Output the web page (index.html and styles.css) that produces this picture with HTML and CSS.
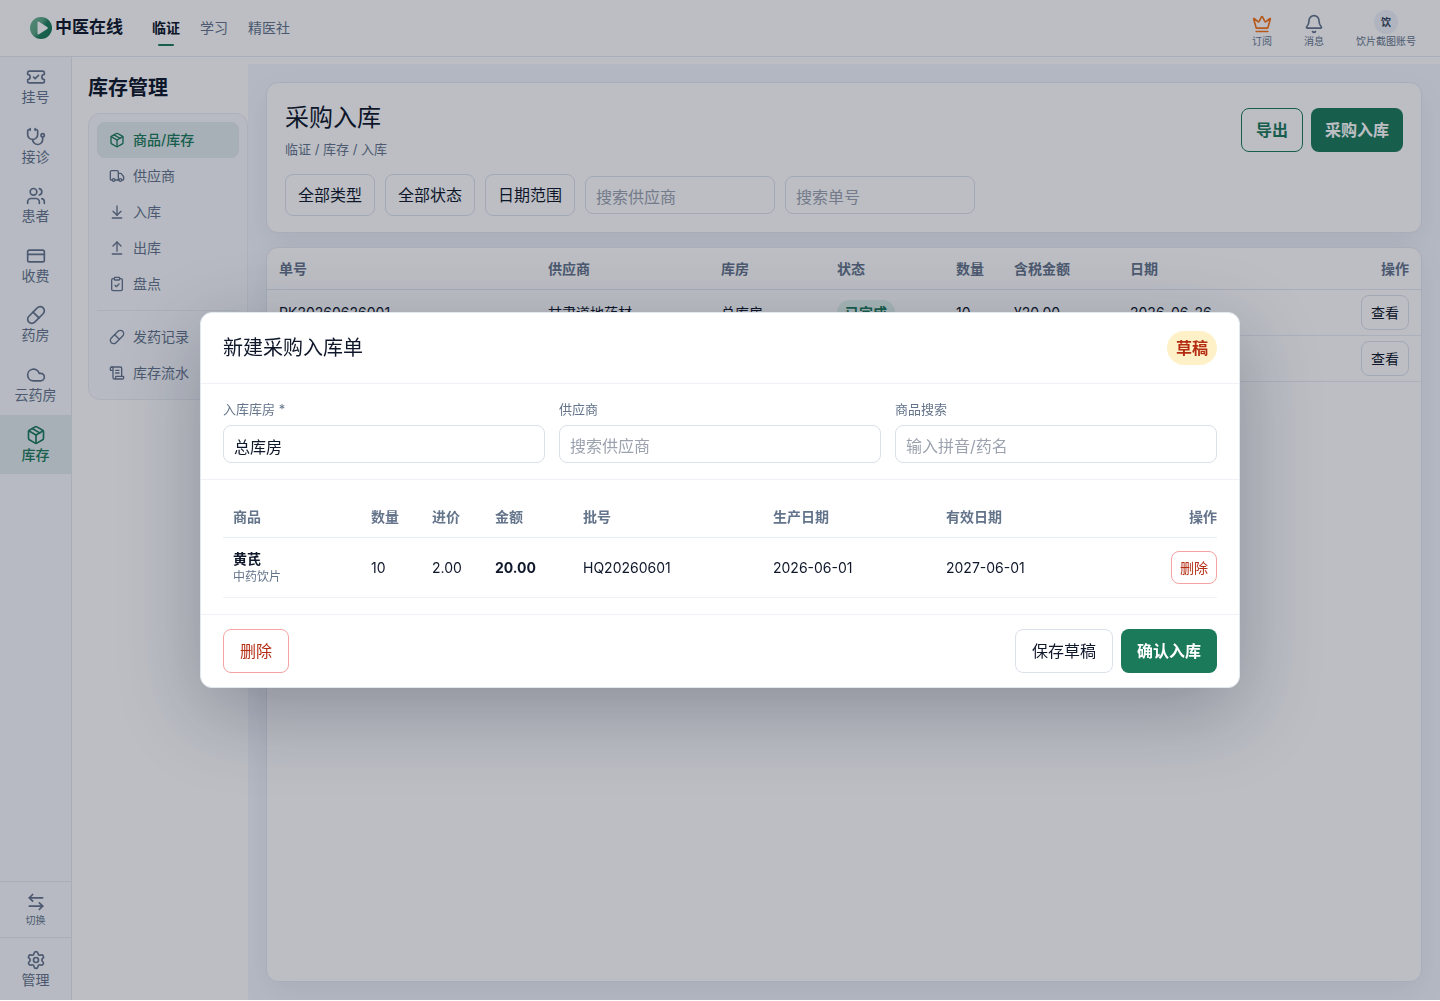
FILE: index.html
```html
<!DOCTYPE html>
<html lang="zh-CN">
<head>
    <meta charset="UTF-8">
    <meta name="viewport" content="width=device-width, initial-scale=1.0">
    <title>采购入库 - 中医在线</title>
    <link rel="stylesheet" href="styles.css">
</head>
<body>
    <!-- Shared icons -->
    <svg class="icon-defs" aria-hidden="true">
        <symbol id="icon-box" viewBox="0 0 24 24">
            <path d="M11 21.73a2 2 0 0 0 2 0l7-4A2 2 0 0 0 21 16V8a2 2 0 0 0-1-1.73l-7-4a2 2 0 0 0-2 0l-7 4A2 2 0 0 0 3 8v8a2 2 0 0 0 1 1.73z"/>
            <path d="M12 22V12"/>
            <path d="M3.29 7 12 12l8.71-5"/>
            <path d="m7.5 4.27 9 5.15"/>
        </symbol>
        <symbol id="icon-pill" viewBox="0 0 24 24">
            <path d="m10.5 20.5 10-10a4.95 4.95 0 1 0-7-7l-10 10a4.95 4.95 0 1 0 7 7Z"/>
            <path d="m8.5 8.5 7 7"/>
        </symbol>
    </svg>

    <header class="topbar">
        <a class="logo" href="#">
            <svg viewBox="0 0 22 22">
                <defs>
                    <linearGradient id="logo-fill" x1="0" y1="0.2" x2="1" y2="0.8">
                        <stop offset="0" stop-color="#6fb593"/>
                        <stop offset="0.4" stop-color="#5aa583"/>
                        <stop offset="0.6" stop-color="#1f7f5b"/>
                        <stop offset="1" stop-color="#187a56"/>
                    </linearGradient>
                </defs>
                <circle cx="11" cy="11" r="11" fill="url(#logo-fill)"/>
                <path d="M7.500 5.500a1 1 0 0 1 1.500-.8l8.200 5.300a1.200 1.200 0 0 1 0 2l-8.200 5.300a1 1 0 0 1-1.500-.8z" fill="#fff"/>
            </svg>
            <span>中医在线</span>
        </a>
        <nav class="top-nav">
            <a class="active" href="#">临证</a>
            <a href="#">学习</a>
            <a href="#">精医社</a>
        </nav>
        <div class="top-actions">
            <a class="subscribe" href="#">
                <svg class="icon" viewBox="0 0 24 24">
                    <path d="M11.562 3.266a.5.5 0 0 1 .876 0L15.39 8.87a1 1 0 0 0 1.516.294L21.183 5.5a.5.5 0 0 1 .798.519l-2.834 10.246a1 1 0 0 1-.956.734H5.81a1 1 0 0 1-.957-.734L2.02 6.02a.5.5 0 0 1 .798-.519l4.276 3.664a1 1 0 0 0 1.516-.294z"/>
                    <path d="M5 21h14"/>
                </svg>
                <span>订阅</span>
            </a>
            <a href="#">
                <svg class="icon" viewBox="0 0 24 24">
                    <path d="M10.268 21a2 2 0 0 0 3.464 0"/>
                    <path d="M3.262 15.326A1 1 0 0 0 4 17h16a1 1 0 0 0 .74-1.673C19.41 13.956 18 12.499 18 8A6 6 0 0 0 6 8c0 4.499-1.411 5.956-2.738 7.326"/>
                </svg>
                <span>消息</span>
            </a>
            <a href="#">
                <b class="avatar">饮</b>
                <span>饮片截图账号</span>
            </a>
        </div>
    </header>

    <div class="layout">
        <nav class="rail">
            <a href="#">
                <svg class="icon" viewBox="0 0 24 24">
                    <path d="M2 9a3 3 0 0 1 0 6v2a2 2 0 0 0 2 2h16a2 2 0 0 0 2-2v-2a3 3 0 0 1 0-6V7a2 2 0 0 0-2-2H4a2 2 0 0 0-2 2Z"/>
                    <path d="m9 12 2 2 4-4"/>
                </svg>
                <span>挂号</span>
            </a>
            <a href="#">
                <svg class="icon" viewBox="0 0 24 24">
                    <path d="M11 2v2"/>
                    <path d="M5 2v2"/>
                    <path d="M5 3H4a2 2 0 0 0-2 2v4a6 6 0 0 0 12 0V5a2 2 0 0 0-2-2h-1"/>
                    <path d="M8 15a6 6 0 0 0 12 0v-3"/>
                    <circle cx="20" cy="10" r="2"/>
                </svg>
                <span>接诊</span>
            </a>
            <a href="#">
                <svg class="icon" viewBox="0 0 24 24">
                    <path d="M16 21v-2a4 4 0 0 0-4-4H6a4 4 0 0 0-4 4v2"/>
                    <circle cx="9" cy="7" r="4"/>
                    <path d="M22 21v-2a4 4 0 0 0-3-3.87"/>
                    <path d="M16 3.13a4 4 0 0 1 0 7.75"/>
                </svg>
                <span>患者</span>
            </a>
            <a href="#">
                <svg class="icon" viewBox="0 0 24 24">
                    <rect width="20" height="14" x="2" y="5" rx="2"/>
                    <path d="M2 10h20"/>
                </svg>
                <span>收费</span>
            </a>
            <a href="#">
                <svg class="icon"><use href="#icon-pill"/></svg>
                <span>药房</span>
            </a>
            <a href="#">
                <svg class="icon" viewBox="0 0 24 24">
                    <path d="M17.5 19H9a7 7 0 1 1 6.71-9h1.79a4.5 4.5 0 1 1 0 9Z"/>
                </svg>
                <span>云药房</span>
            </a>
            <a class="active" href="#">
                <svg class="icon"><use href="#icon-box"/></svg>
                <span>库存</span>
            </a>
            <div class="rail-bottom">
                <a class="switch" href="#">
                    <svg class="icon" viewBox="0 0 24 24">
                        <path d="M8 3 4 7l4 4"/>
                        <path d="M4 7h16"/>
                        <path d="m16 21 4-4-4-4"/>
                        <path d="M20 17H4"/>
                    </svg>
                    <span>切换</span>
                </a>
                <a class="settings" href="#">
                    <svg class="icon" viewBox="0 0 24 24">
                        <path d="M9.671 4.136a2.34 2.34 0 0 1 4.659 0 2.34 2.34 0 0 0 3.319 1.915 2.34 2.34 0 0 1 2.33 4.033 2.34 2.34 0 0 0 0 3.831 2.34 2.34 0 0 1-2.33 4.033 2.34 2.34 0 0 0-3.319 1.915 2.34 2.34 0 0 1-4.659 0 2.34 2.34 0 0 0-3.32-1.915 2.34 2.34 0 0 1-2.33-4.033 2.34 2.34 0 0 0 0-3.831A2.34 2.34 0 0 1 6.35 6.051a2.34 2.34 0 0 0 3.319-1.915"/>
                        <circle cx="12" cy="12" r="3"/>
                    </svg>
                    <span>管理</span>
                </a>
            </div>
        </nav>

        <aside class="side">
            <h2>库存管理</h2>
            <nav class="side-menu">
                <a class="active" href="#">
                    <svg class="icon"><use href="#icon-box"/></svg>
                    <span>商品/库存</span>
                </a>
                <a href="#">
                    <svg class="icon" viewBox="0 0 24 24">
                        <path d="M14 18V6a2 2 0 0 0-2-2H4a2 2 0 0 0-2 2v11a1 1 0 0 0 1 1h2"/>
                        <path d="M15 18H9"/>
                        <path d="M19 18h2a1 1 0 0 0 1-1v-3.65a1 1 0 0 0-.22-.624l-3.48-4.35A1 1 0 0 0 17.52 8H14"/>
                        <circle cx="17" cy="18" r="2"/>
                        <circle cx="7" cy="18" r="2"/>
                    </svg>
                    <span>供应商</span>
                </a>
                <a href="#">
                    <svg class="icon" viewBox="0 0 24 24">
                        <path d="M12 17V3"/>
                        <path d="m6 11 6 6 6-6"/>
                        <path d="M19 21H5"/>
                    </svg>
                    <span>入库</span>
                </a>
                <a href="#">
                    <svg class="icon" viewBox="0 0 24 24">
                        <path d="m18 9-6-6-6 6"/>
                        <path d="M12 3v14"/>
                        <path d="M5 21h14"/>
                    </svg>
                    <span>出库</span>
                </a>
                <a href="#">
                    <svg class="icon" viewBox="0 0 24 24">
                        <rect width="8" height="4" x="8" y="2" rx="1"/>
                        <path d="M16 4h2a2 2 0 0 1 2 2v14a2 2 0 0 1-2 2H6a2 2 0 0 1-2-2V6a2 2 0 0 1 2-2h2"/>
                        <path d="m9 14 2 2 4-4"/>
                    </svg>
                    <span>盘点</span>
                </a>
                <hr>
                <a href="#">
                    <svg class="icon"><use href="#icon-pill"/></svg>
                    <span>发药记录</span>
                </a>
                <a href="#">
                    <svg class="icon" viewBox="0 0 24 24">
                        <path d="M15 12h-5"/>
                        <path d="M15 8h-5"/>
                        <path d="M19 17V5a2 2 0 0 0-2-2H4"/>
                        <path d="M8 21h12a2 2 0 0 0 2-2v-1a1 1 0 0 0-1-1H11a1 1 0 0 0-1 1v1a2 2 0 1 1-4 0V5a2 2 0 1 0-4 0v2a1 1 0 0 0 1 1h3"/>
                    </svg>
                    <span>库存流水</span>
                </a>
            </nav>
        </aside>

        <main class="content">
            <section class="card page-head">
                <div class="page-title">
                    <div>
                        <h1>采购入库</h1>
                        <p>临证 / 库存 / 入库</p>
                    </div>
                    <div class="buttons">
                        <button class="btn outline" type="button">导出</button>
                        <button class="btn primary" type="button">采购入库</button>
                    </div>
                </div>
                <div class="filters">
                    <button class="filter" type="button">全部类型</button>
                    <button class="filter" type="button">全部状态</button>
                    <button class="filter" type="button">日期范围</button>
                    <input class="field" type="text" placeholder="搜索供应商" aria-label="搜索供应商">
                    <input class="field" type="text" placeholder="搜索单号" aria-label="搜索单号">
                </div>
            </section>

            <section class="card order-list">
                <table class="orders">
                    <colgroup>
                        <col class="col-no">
                        <col class="col-supplier">
                        <col class="col-store">
                        <col class="col-status">
                        <col class="col-qty">
                        <col class="col-amount">
                        <col>
                        <col class="col-action">
                    </colgroup>
                    <thead>
                        <tr>
                            <th>单号</th>
                            <th>供应商</th>
                            <th>库房</th>
                            <th>状态</th>
                            <th>数量</th>
                            <th>含税金额</th>
                            <th>日期</th>
                            <th>操作</th>
                        </tr>
                    </thead>
                    <tbody>
                        <tr>
                            <td>RK20260626001</td>
                            <td>甘肃道地药材</td>
                            <td>总库房</td>
                            <td><span class="badge done">已完成</span></td>
                            <td>10</td>
                            <td>¥20.00</td>
                            <td>2026-06-26</td>
                            <td><button class="btn small" type="button">查看</button></td>
                        </tr>
                        <tr>
                            <td></td>
                            <td></td>
                            <td></td>
                            <td></td>
                            <td></td>
                            <td></td>
                            <td></td>
                            <td><button class="btn small" type="button">查看</button></td>
                        </tr>
                    </tbody>
                </table>
            </section>
        </main>
    </div>

    <!-- New purchase order dialog -->
    <div class="overlay">
        <div class="modal" role="dialog" aria-modal="true" aria-labelledby="modal-title">
            <div class="modal-head">
                <h2 id="modal-title">新建采购入库单</h2>
                <span class="badge draft">草稿</span>
            </div>
            <div class="modal-form">
                <label>
                    <span>入库库房 *</span>
                    <input class="field" type="text" value="总库房">
                </label>
                <label>
                    <span>供应商</span>
                    <input class="field" type="text" placeholder="搜索供应商">
                </label>
                <label>
                    <span>商品搜索</span>
                    <input class="field" type="text" placeholder="输入拼音/药名">
                </label>
            </div>
            <div class="modal-body">
                <table class="items">
                    <colgroup>
                        <col class="item-name">
                        <col class="item-qty">
                        <col class="item-price">
                        <col class="item-amount">
                        <col class="item-batch">
                        <col class="item-made">
                        <col>
                        <col class="item-action">
                    </colgroup>
                    <thead>
                        <tr>
                            <th>商品</th>
                            <th>数量</th>
                            <th>进价</th>
                            <th>金额</th>
                            <th>批号</th>
                            <th>生产日期</th>
                            <th>有效日期</th>
                            <th>操作</th>
                        </tr>
                    </thead>
                    <tbody>
                        <tr>
                            <td><strong>黄芪</strong><small>中药饮片</small></td>
                            <td>10</td>
                            <td>2.00</td>
                            <td><strong>20.00</strong></td>
                            <td>HQ20260601</td>
                            <td>2026-06-01</td>
                            <td>2027-06-01</td>
                            <td><button class="btn small danger" type="button">删除</button></td>
                        </tr>
                    </tbody>
                </table>
            </div>
            <div class="modal-foot">
                <button class="btn danger" type="button">删除</button>
                <div class="buttons">
                    <button class="btn" type="button">保存草稿</button>
                    <button class="btn primary" type="button">确认入库</button>
                </div>
            </div>
        </div>
    </div>
</body>
</html>
```
FILE: styles.css
```css
* {
    box-sizing: border-box;
}
body {
    margin: 0;
    height: 100vh;
    padding-bottom: 1px;
    display: flex;
    flex-direction: column;
    font-family: Inter, "Noto Sans CJK SC", sans-serif;
    font-size: 14px;
    line-height: 1.4;
    color: #0f172a;
    background: #fff;
}
h1, h2, p {
    margin: 0;
}
a {
    color: inherit;
    text-decoration: none;
}
button, input {
    font-family: inherit;
    font-size: 16px;
    color: inherit;
}
.icon-defs {
    display: none;
}
.icon {
    width: 20px;
    height: 20px;
    flex: none;
    fill: none;
    stroke: currentColor;
    stroke-width: 2;
    stroke-linecap: round;
    stroke-linejoin: round;
}

/* Top bar */
.topbar {
    display: flex;
    align-items: center;
    flex: none;
    height: 57px;
    padding: 0 24px 0 30px;
    border-bottom: 1px solid #e2e8f0;
}
.logo {
    display: flex;
    align-items: center;
    gap: 3px;
    font-size: 17px;
    font-weight: 700;
}
.logo svg {
    width: 22px;
    height: 22px;
}
.top-nav {
    display: flex;
    gap: 20px;
    margin-left: 29px;
    color: #64748b;
}
.top-nav a {
    position: relative;
}
.top-nav .active {
    color: #0f172a;
    font-weight: 700;
}
.top-nav .active::after {
    content: "";
    position: absolute;
    left: 6px;
    right: 6px;
    bottom: -8px;
    height: 2px;
    border-radius: 1px;
    background: #1b7a5a;
}
.top-actions {
    display: flex;
    align-items: flex-end;
    gap: 32px;
    margin-left: auto;
    padding-top: 2px;
    font-size: 10px;
    color: #64748b;
}
.top-actions a {
    display: flex;
    flex-direction: column;
    align-items: center;
}
.subscribe .icon {
    color: #f97316;
}
.avatar {
    width: 24px;
    height: 24px;
    border-radius: 50%;
    line-height: 24px;
    text-align: center;
    color: #334155;
    background: #eef2f8;
}

/* Left navigation */
.layout {
    display: flex;
    flex: 1;
    min-height: 0;
}
.rail {
    display: flex;
    flex-direction: column;
    width: 72px;
    flex: none;
    border-right: 1px solid #e2e8f0;
    color: #64748b;
    background: #f8fafd;
}
.rail a {
    display: flex;
    flex-direction: column;
    align-items: center;
    padding: 10px 0;
}
.rail .active {
    color: #1b7a5a;
    font-weight: 500;
    background: #e2ecec;
}
.rail-bottom {
    margin-top: auto;
}
.rail .switch {
    gap: 1px;
    font-size: 10px;
    border-top: 1px solid #e2e8f0;
}
.rail .settings {
    padding-top: 12px;
    border-top: 1px solid #e2e8f0;
}
.side {
    width: 176px;
    flex: none;
    padding: 16px 0 0 16px;
}
.side h2 {
    font-size: 20px;
    line-height: 30px;
}
.side-menu {
    margin-top: 10px;
    padding: 8px;
    border: 1px solid #e8edf4;
    border-radius: 12px;
    color: #64748b;
    background: #f8fafd;
}
.side-menu a {
    display: flex;
    align-items: center;
    gap: 8px;
    height: 36px;
    padding: 0 12px;
    border-radius: 8px;
}
.side-menu .active {
    color: #1b7a5a;
    font-weight: 500;
    background: #e2ecec;
}
.side-menu .icon {
    width: 16px;
    height: 16px;
}
.side-menu hr {
    height: 1px;
    margin: 8px 0;
    border: none;
    background: #e8edf4;
}

/* Page content */
.content {
    display: flex;
    flex-direction: column;
    flex: 1;
    gap: 14px;
    min-width: 0;
    margin-top: 7px;
    padding: 18px;
    overflow: hidden;
    background: #f4f7fd;
}
.card {
    border: 1px solid #e2e8f0;
    border-radius: 12px;
    background: #fff;
    box-shadow: 0 10px 30px rgba(15, 23, 42, 0.06);
}
.page-head {
    padding: 18px 18px 16px;
}
.page-title {
    display: flex;
    align-items: center;
    justify-content: space-between;
}
.page-title h1 {
    font-size: 24px;
    font-weight: 400;
    line-height: 34px;
}
.page-title p {
    margin-top: 4px;
    font-size: 13px;
    line-height: 20px;
    color: #64748b;
}
.buttons {
    display: flex;
    gap: 8px;
}
.btn {
    height: 44px;
    padding: 0 16px 2px;
    border: 1px solid #dbe1ea;
    border-radius: 8px;
    background: transparent;
    cursor: pointer;
}
.btn.primary {
    border: none;
    font-weight: 700;
    color: #fff;
    background: #1b7a5a;
}
.btn.outline {
    border-color: #1b7a5a;
    font-weight: 700;
    color: #1b7a5a;
}
.btn.danger {
    border-color: #f5a3a3;
    color: #b42d12;
}
.btn.small {
    height: 35px;
    padding: 0 9px 2px;
    font-size: 14px;
}
.page-title .btn {
    padding: 0 14px 2px;
}
.filters {
    display: flex;
    align-items: center;
    gap: 10px;
    margin-top: 15px;
}
.filter {
    height: 42px;
    padding: 0 12px 2px;
    border: 1px solid #dbe1ea;
    border-radius: 8px;
    background: transparent;
    cursor: pointer;
}
.field {
    width: 100%;
    height: 38px;
    padding: 3px 10px 0;
    border: 1px solid #dbe1ea;
    border-radius: 8px;
    background: transparent;
}
.field::placeholder {
    color: #9ca3af;
}
.filters .field {
    width: 190px;
}

/* Tables */
table {
    width: 100%;
    table-layout: fixed;
    border-collapse: separate;
    border-spacing: 0;
}
th {
    text-align: left;
    font-weight: 700;
    color: #64748b;
}
th:last-child, td:last-child {
    text-align: right;
}
.order-list {
    flex: 1;
}
.orders th {
    height: 42px;
    padding: 0 12px;
    border-bottom: 1px solid #e2e8f0;
}
.orders td {
    height: 46px;
    padding: 0 12px;
    border-bottom: 1px solid #e8edf4;
}
.col-no {
    width: 269px;
}
.col-supplier {
    width: 173px;
}
.col-store {
    width: 116px;
}
.col-status {
    width: 119px;
}
.col-qty {
    width: 58px;
}
.col-amount {
    width: 116px;
}
.col-action {
    width: 80px;
}
.badge {
    display: inline-block;
    border-radius: 20px;
    font-weight: 700;
}
.badge.done {
    padding: 3px 8px;
    color: #1b7a5a;
    background: #e2f3ec;
}
.badge.draft {
    padding: 0 9px;
    font-size: 16px;
    line-height: 34px;
    color: #b42d12;
    background: #fef0c7;
}

/* Dialog */
.overlay {
    position: fixed;
    inset: 0 0 1px;
    display: flex;
    align-items: center;
    justify-content: center;
    padding: 20px;
    background: rgba(15, 23, 42, 0.28);
}
.modal {
    width: 100%;
    max-width: 1040px;
    border: 1px solid #e2e8f0;
    border-radius: 12px;
    background: #fff;
    box-shadow: 0 24px 80px rgba(15, 23, 42, 0.28);
}
.modal-head {
    display: flex;
    align-items: center;
    justify-content: space-between;
    padding: 18px 22px;
    border-bottom: 1px solid #eef1f6;
}
.modal-head h2 {
    font-size: 20px;
    font-weight: 400;
    line-height: 30px;
}
.modal-form {
    display: grid;
    grid-template-columns: repeat(3, 1fr);
    gap: 14px;
    padding: 16px 22px;
    border-bottom: 1px solid #eef1f6;
}
.modal-form label {
    display: grid;
    gap: 7px;
}
.modal-form span {
    font-size: 13px;
    line-height: 18px;
    color: #64748b;
}
.modal-body {
    padding: 16px 22px;
}
.items th {
    height: 42px;
    padding: 0 10px;
    border-bottom: 1px solid #e8edf4;
}
.items td {
    height: 60px;
    padding: 0 10px;
    border-bottom: 1px solid #eef1f6;
}
.items th:last-child, .items td:last-child {
    padding-right: 0;
}
.items .btn {
    height: 33px;
    padding: 0 8px 2px;
}
.items small {
    display: block;
    margin-top: 1px;
    font-size: 12px;
    color: #64748b;
}
.item-name {
    width: 138px;
}
.item-qty {
    width: 61px;
}
.item-price {
    width: 63px;
}
.item-amount {
    width: 88px;
}
.item-batch {
    width: 190px;
}
.item-made {
    width: 173px;
}
.item-action {
    width: 80px;
}
.modal-foot {
    display: flex;
    align-items: center;
    justify-content: space-between;
    padding: 14px 22px;
    border-top: 1px solid #eef1f6;
}
```
